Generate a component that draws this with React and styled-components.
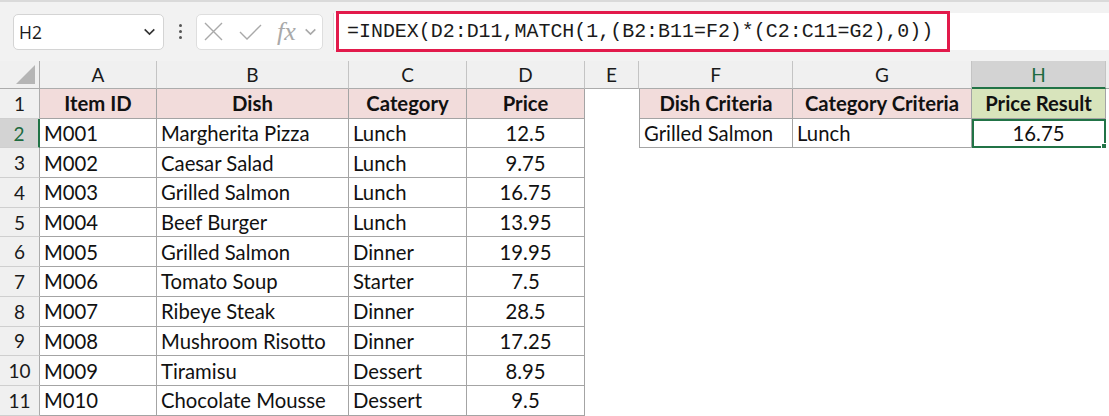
import React from 'react';
import styled, { createGlobalStyle } from 'styled-components';

const GlobalStyle = createGlobalStyle`
  body {
    margin: 0;
    background: #ffffff;
    font-family: Lato, "Liberation Sans", sans-serif;
  }
`;

const Page = styled.div`
  width: 1109px;
  height: 416px;
  overflow: hidden;
  background: #ffffff;
`;

const TopBar = styled.div`
  height: 61px;
  box-sizing: border-box;
  border-top: 2px solid #dadada;
  background: #f2f2f2;
  display: flex;
  align-items: center;
  padding-left: 13px;
`;

const NameBox = styled.div`
  width: 151px;
  height: 36px;
  box-sizing: border-box;
  background: #ffffff;
  border: 1px solid #d4d4d4;
  border-radius: 5px;
  display: flex;
  align-items: center;
  justify-content: space-between;
  padding: 0 6px 0 5px;
  font-family: "Open Sans", "Noto Sans", sans-serif;
  font-size: 17.5px;
  color: #1a1a1a;
`;

const Dots = styled.div`
  width: 32px;
  display: flex;
  flex-direction: column;
  align-items: center;
  gap: 3px;

  span {
    width: 3px;
    height: 3px;
    border-radius: 50%;
    background: #555555;
  }
`;

const FxBox = styled.div`
  width: 127px;
  height: 36px;
  box-sizing: border-box;
  background: #ffffff;
  border: 1px solid #dedede;
  border-radius: 5px;
  display: flex;
  align-items: center;
  gap: 15px;
  padding-left: 6px;
`;

const Fx = styled.span`
  font-family: "Liberation Serif", serif;
  font-style: italic;
  font-size: 26px;
  line-height: 1;
  color: #a9a9a9;
  margin-right: -8px;
`;

const FormulaArea = styled.div`
  flex: 1;
  height: 37px;
  margin-left: 10px;
  background: #ffffff;
  border-left: 1px solid #d8d8d8;
  display: flex;
  align-items: center;
`;

const Highlight = styled.div`
  width: 614px;
  height: 41px;
  box-sizing: border-box;
  margin-left: 2px;
  border: 3px solid #e21a4b;
  display: flex;
  align-items: center;
  padding-left: 8px;
  font-family: "Liberation Mono", monospace;
  font-size: 19.95px;
  color: #1a1a1a;
  white-space: nowrap;
`;

const Sheet = styled.div`
  display: grid;
  grid-template-columns: 40px 117px 192px 118px 118px 54px 154px 179px 134px 1fr;
  grid-template-rows: 28px repeat(11, 29.7px);
  font-size: 20.3px;
  color: #111111;
`;

const ColHead = styled.div`
  box-sizing: border-box;
  display: flex;
  align-items: center;
  justify-content: center;
  font-size: 19px;
  background: ${(p) => (p.$active ? '#d3d3d3' : '#f0f0f0')};
  color: ${(p) => (p.$active ? '#1e6b3f' : '#1a1a1a')};
  border-right: 1px solid #c4c4c4;
  border-bottom: ${(p) => (p.$active ? '2px solid #217346' : '1px solid #acacac')};
`;

const Corner = styled.div`
  box-sizing: border-box;
  background: #f0f0f0;
  border-right: 1px solid #acacac;
  border-bottom: 1px solid #acacac;
  display: flex;
  align-items: flex-end;
  justify-content: flex-end;
  padding: 0 4px 4px 0;
`;

const RowHead = styled.div`
  box-sizing: border-box;
  display: flex;
  align-items: center;
  justify-content: center;
  font-size: 19px;
  background: ${(p) => (p.$active ? '#d3d3d3' : '#f0f0f0')};
  color: ${(p) => (p.$active ? '#1e6b3f' : '#1a1a1a')};
  border-bottom: 1px solid #cfcfcf;
  border-right: ${(p) => (p.$active ? '2px solid #217346' : '1px solid #acacac')};
`;

const Cell = styled.div`
  position: relative;
  box-sizing: border-box;
  display: flex;
  align-items: center;
  justify-content: ${(p) => (p.$center ? 'center' : 'flex-start')};
  padding: 0 4px;
  white-space: nowrap;
  font-weight: ${(p) => (p.$bold ? 700 : 400)};
  background: ${(p) => p.$bg || '#ffffff'};
  border-right: ${(p) => (p.$plain ? 'none' : '1px solid #a4a4a4')};
  border-bottom: ${(p) => (p.$plain ? 'none' : '1px solid #a4a4a4')};
  border-left: ${(p) => (p.$leftEdge ? '1px solid #a4a4a4' : 'none')};
  outline: ${(p) => (p.$selected ? '2px solid #217346' : 'none')};
  outline-offset: -2px;
`;

const Handle = styled.span`
  position: absolute;
  right: -4px;
  bottom: -4px;
  width: 6px;
  height: 6px;
  background: #217346;
  border: 1px solid #ffffff;
`;

const Chevron = ({ color = '#333', size = 14 }) => (
  <svg width={size} height={size} viewBox="0 0 14 14" fill="none">
    <path d="M2.5 5 L7 9.5 L11.5 5" stroke={color} strokeWidth="1.5" />
  </svg>
);

const PINK = '#f2dcdb';
const GREEN = '#d8e4bc';

const rows = [
  ['M001', 'Margherita Pizza', 'Lunch', '12.5'],
  ['M002', 'Caesar Salad', 'Lunch', '9.75'],
  ['M003', 'Grilled Salmon', 'Lunch', '16.75'],
  ['M004', 'Beef Burger', 'Lunch', '13.95'],
  ['M005', 'Grilled Salmon', 'Dinner', '19.95'],
  ['M006', 'Tomato Soup', 'Starter', '7.5'],
  ['M007', 'Ribeye Steak', 'Dinner', '28.5'],
  ['M008', 'Mushroom Risotto', 'Dinner', '17.25'],
  ['M009', 'Tiramisu', 'Dessert', '8.95'],
  ['M010', 'Chocolate Mousse', 'Dessert', '9.5'],
];

function App() {
  return (
    <Page>
      <GlobalStyle />
      <TopBar>
        <NameBox>
          <span>H2</span>
          <Chevron size={15} />
        </NameBox>
        <Dots>
          <span />
          <span />
          <span />
        </Dots>
        <FxBox>
          <svg width="21" height="21" viewBox="0 0 21 21">
            <path d="M2 2 L19 19 M19 2 L2 19" stroke="#a9a9a9" strokeWidth="1.4" />
          </svg>
          <svg width="23" height="20" viewBox="0 0 23 20" fill="none">
            <path d="M1 10 L8 17 L22 3" stroke="#a9a9a9" strokeWidth="1.4" />
          </svg>
          <Fx>fx</Fx>
          <Chevron color="#a9a9a9" size={15} />
        </FxBox>
        <FormulaArea>
          <Highlight>=INDEX(D2:D11,MATCH(1,(B2:B11=F2)*(C2:C11=G2),0))</Highlight>
        </FormulaArea>
      </TopBar>

      <Sheet>
        <Corner>
          <svg width="19" height="19" viewBox="0 0 19 19">
            <polygon points="19,0 19,19 0,19" fill="#b5b5b5" />
          </svg>
        </Corner>
        {['A', 'B', 'C', 'D', 'E', 'F', 'G', 'H'].map((c) => (
          <ColHead key={c} $active={c === 'H'}>
            {c}
          </ColHead>
        ))}
        <ColHead />

        <RowHead>1</RowHead>
        <Cell $bg={PINK} $bold $center>Item ID</Cell>
        <Cell $bg={PINK} $bold $center>Dish</Cell>
        <Cell $bg={PINK} $bold $center>Category</Cell>
        <Cell $bg={PINK} $bold $center>Price</Cell>
        <Cell $plain />
        <Cell $bg={PINK} $bold $center $leftEdge>Dish Criteria</Cell>
        <Cell $bg={PINK} $bold $center>Category Criteria</Cell>
        <Cell $bg={GREEN} $bold $center>Price Result</Cell>
        <Cell $plain />

        {rows.map((r, i) => (
          <React.Fragment key={r[0]}>
            <RowHead $active={i === 0}>{i + 2}</RowHead>
            <Cell>{r[0]}</Cell>
            <Cell>{r[1]}</Cell>
            <Cell>{r[2]}</Cell>
            <Cell $center>{r[3]}</Cell>
            <Cell $plain />
            {i === 0 ? (
              <>
                <Cell $leftEdge>Grilled Salmon</Cell>
                <Cell>Lunch</Cell>
                <Cell $center $selected>
                  16.75
                  <Handle />
                </Cell>
              </>
            ) : (
              <>
                <Cell $plain />
                <Cell $plain />
                <Cell $plain />
              </>
            )}
            <Cell $plain />
          </React.Fragment>
        ))}
      </Sheet>
    </Page>
  );
}

export default App;
